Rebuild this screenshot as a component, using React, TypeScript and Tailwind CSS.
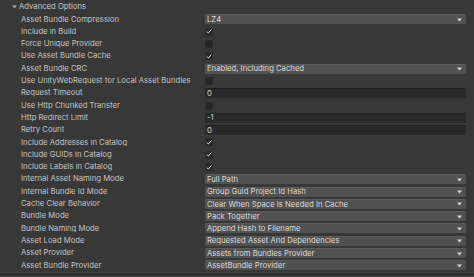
import React from "react"

type Field =
  | { kind: "dropdown"; value: string }
  | { kind: "text"; value: string }
  | { kind: "check"; checked: boolean }

const rows: { label: string; field: Field }[] = [
  { label: "Asset Bundle Compression", field: { kind: "dropdown", value: "LZ4" } },
  { label: "Include in Build", field: { kind: "check", checked: true } },
  { label: "Force Unique Provider", field: { kind: "check", checked: false } },
  { label: "Use Asset Bundle Cache", field: { kind: "check", checked: true } },
  { label: "Asset Bundle CRC", field: { kind: "dropdown", value: "Enabled, Including Cached" } },
  { label: "Use UnityWebRequest for Local Asset Bundles", field: { kind: "check", checked: false } },
  { label: "Request Timeout", field: { kind: "text", value: "0" } },
  { label: "Use Http Chunked Transfer", field: { kind: "check", checked: false } },
  { label: "Http Redirect Limit", field: { kind: "text", value: "-1" } },
  { label: "Retry Count", field: { kind: "text", value: "0" } },
  { label: "Include Addresses in Catalog", field: { kind: "check", checked: true } },
  { label: "Include GUIDs in Catalog", field: { kind: "check", checked: true } },
  { label: "Include Labels in Catalog", field: { kind: "check", checked: true } },
  { label: "Internal Asset Naming Mode", field: { kind: "dropdown", value: "Full Path" } },
  { label: "Internal Bundle Id Mode", field: { kind: "dropdown", value: "Group Guid Project Id Hash" } },
  { label: "Cache Clear Behavior", field: { kind: "dropdown", value: "Clear When Space Is Needed In Cache" } },
  { label: "Bundle Mode", field: { kind: "dropdown", value: "Pack Together" } },
  { label: "Bundle Naming Mode", field: { kind: "dropdown", value: "Append Hash to Filename" } },
  { label: "Asset Load Mode", field: { kind: "dropdown", value: "Requested Asset And Dependencies" } },
  { label: "Asset Provider", field: { kind: "dropdown", value: "Assets from Bundles Provider" } },
  { label: "Asset Bundle Provider", field: { kind: "dropdown", value: "AssetBundle Provider" } },
]

function Arrow() {
  return (
    <svg width="5" height="4" viewBox="0 0 5 4" className="shrink-0">
      <path d="M0 0.5 H5 L2.5 3.5 Z" fill="#d8d8d8" />
    </svg>
  )
}

function Check({ checked }: { checked: boolean }) {
  return (
    <div className="flex h-[8px] w-[8px] items-center justify-center rounded-[1.5px] border border-[#2a2a2a] bg-[#252525]">
      {checked && (
        <svg width="7" height="7" viewBox="0 0 8 8">
          <path d="M1.3 4.3 L3.1 6 L6.8 1.8" fill="none" stroke="#e6e6e6" strokeWidth="1.3" strokeLinecap="round" strokeLinejoin="round" />
        </svg>
      )}
    </div>
  )
}

function FieldView({ field }: { field: Field }) {
  if (field.kind === "check") return <Check checked={field.checked} />
  if (field.kind === "text")
    return (
      <div className="flex h-[10px] flex-1 items-center rounded-[1.5px] border-t border-[#212121] bg-[#2a2a2a] px-[2px] text-[#d2d2d2]">
        {field.value}
      </div>
    )
  return (
    <div className="flex h-[10px] flex-1 items-center justify-between rounded-[1.5px] border-t border-[#5c5c5c] bg-[#515151] pl-[2px] pr-[4px] text-[#dcdcdc]">
      <span>{field.value}</span>
      <Arrow />
    </div>
  )
}

export default function App() {
  return (
    <div
      className="flex h-[277px] w-[474px] flex-col overflow-hidden bg-[#3c3c3c] text-[7.7px] leading-none"
      style={{ fontFamily: "Inter, 'Noto Sans', sans-serif" }}
    >
      <div className="flex flex-col bg-[#383838] pt-[1px] pb-[2px] border-b border-[#232323]">
        <div className="flex h-[12.3px] items-center pl-[12px] text-[#c8c8c8]">
          <svg width="5" height="4" viewBox="0 0 5 4" className="mr-[2px]">
            <path d="M0 0.5 H5 L2.5 3.5 Z" fill="#a8a8a8" />
          </svg>
          <span>Advanced Options</span>
        </div>
        {rows.map((r) => (
          <div key={r.label} className="flex h-[12.3px] items-center pl-[21px] pr-[8px]">
            <div className="w-[184px] shrink-0 truncate text-[#c4c4c4]">{r.label}</div>
            <div className="flex flex-1 items-center">
              <FieldView field={r.field} />
            </div>
          </div>
        ))}
      </div>
    </div>
  )
}
